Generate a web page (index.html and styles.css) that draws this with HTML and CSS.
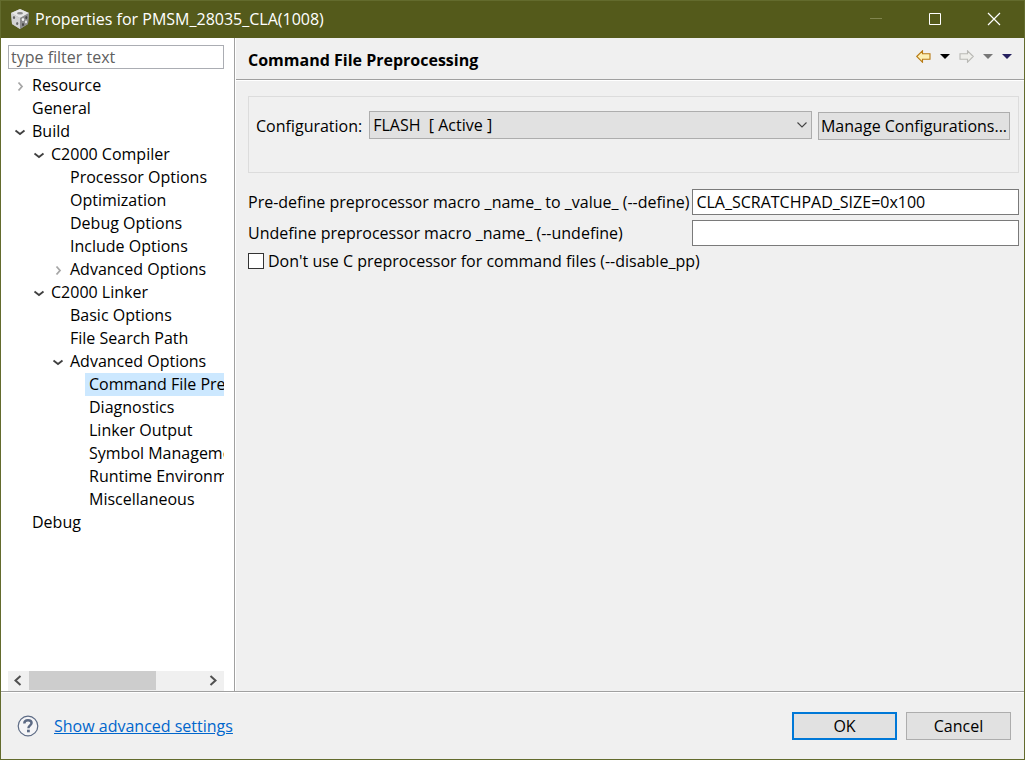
FILE: index.html
```html
<!DOCTYPE html>
<html lang="en">
<head>
<meta charset="utf-8">
<title>Properties for PMSM_28035_CLA(1008)</title>
<link rel="stylesheet" href="styles.css">
</head>
<body>
<svg class="defs" aria-hidden="true">
  <symbol id="closed" viewBox="0 0 20 23"><path d="M10.500 8.500L14 12.500L10.500 16.500" fill="none" stroke="#a6a6a6" stroke-width="1.800"/></symbol>
  <symbol id="open" viewBox="0 0 20 23"><path d="M7.500 10.500L12 14L16.500 10.500" fill="none" stroke="#404040" stroke-width="1.800"/></symbol>
</svg>
<div class="window">
  <header class="titlebar">
    <svg class="app-icon" viewBox="0 0 20 20">
      <path d="M10 0L19 4L18 15L10 20L2 15L1 4Z" fill="#a9a9a9"/>
      <path d="M10 0L19 4L10 9L1 4Z" fill="#e6e6e6"/>
      <path d="M1 4L10 9V20L2 15Z" fill="#d2d2d2"/>
      <path d="M19 4L10 9V20L18 15Z" fill="#8c8c8c"/>
      <ellipse cx="10" cy="4.300" rx="3" ry="1.300" fill="#888"/>
      <ellipse cx="4" cy="8.500" rx="1.100" ry="1.600" fill="#666"/>
      <ellipse cx="7.200" cy="14.500" rx="1.100" ry="1.600" fill="#666"/>
      <ellipse cx="13" cy="10.500" rx="1.200" ry="1.600" fill="#f4f4f4"/>
      <ellipse cx="16.300" cy="8.500" rx="1" ry="1.500" fill="#444"/>
      <ellipse cx="13" cy="15.500" rx="1" ry="1.500" fill="#444"/>
      <ellipse cx="16" cy="13" rx="1" ry="1.400" fill="#eee"/>
    </svg>
    <h1 class="title">Properties for PMSM_28035_CLA(1008)</h1>
    <div class="window-controls">
      <button class="control" aria-label="Minimize" disabled><svg viewBox="0 0 14 14"><path d="M1 6.500H13" stroke="#81854f"/></svg></button>
      <button class="control" aria-label="Maximize"><svg viewBox="0 0 14 14"><path d="M1.500 1.500H12.500V12.500H1.500Z" fill="none" stroke="#fff"/></svg></button>
      <button class="control" aria-label="Close"><svg viewBox="0 0 14 14"><path d="M1 1L13 13M13 1L1 13" stroke="#fff" stroke-width="1.200"/></svg></button>
    </div>
  </header>

  <div class="body">
    <nav class="sidebar">
      <input class="filter" type="text" placeholder="type filter text" aria-label="Filter">
      <div class="tree-view">
        <ul class="tree">
          <li><div class="row"><svg class="toggle"><use href="#closed"/></svg><span class="label">Resource</span></div></li>
          <li><div class="row"><span class="toggle"></span><span class="label">General</span></div></li>
          <li><div class="row"><svg class="toggle"><use href="#open"/></svg><span class="label">Build</span></div>
            <ul class="branch">
              <li><div class="row"><svg class="toggle"><use href="#open"/></svg><span class="label">C2000 Compiler</span></div>
                <ul class="branch">
                  <li><div class="row"><span class="toggle"></span><span class="label">Processor Options</span></div></li>
                  <li><div class="row"><span class="toggle"></span><span class="label">Optimization</span></div></li>
                  <li><div class="row"><span class="toggle"></span><span class="label">Debug Options</span></div></li>
                  <li><div class="row"><span class="toggle"></span><span class="label">Include Options</span></div></li>
                  <li><div class="row"><svg class="toggle"><use href="#closed"/></svg><span class="label">Advanced Options</span></div></li>
                </ul>
              </li>
              <li><div class="row"><svg class="toggle"><use href="#open"/></svg><span class="label">C2000 Linker</span></div>
                <ul class="branch">
                  <li><div class="row"><span class="toggle"></span><span class="label">Basic Options</span></div></li>
                  <li><div class="row"><span class="toggle"></span><span class="label">File Search Path</span></div></li>
                  <li><div class="row"><svg class="toggle"><use href="#open"/></svg><span class="label">Advanced Options</span></div>
                    <ul class="branch">
                      <li><div class="row"><span class="toggle"></span><span class="label selected">Command File Preprocessing</span></div></li>
                      <li><div class="row"><span class="toggle"></span><span class="label">Diagnostics</span></div></li>
                      <li><div class="row"><span class="toggle"></span><span class="label">Linker Output</span></div></li>
                      <li><div class="row"><span class="toggle"></span><span class="label">Symbol Management</span></div></li>
                      <li><div class="row"><span class="toggle"></span><span class="label">Runtime Environment</span></div></li>
                      <li><div class="row"><span class="toggle"></span><span class="label">Miscellaneous</span></div></li>
                    </ul>
                  </li>
                </ul>
              </li>
            </ul>
          </li>
          <li><div class="row"><span class="toggle"></span><span class="label">Debug</span></div></li>
        </ul>
      </div>
      <div class="scrollbar">
        <button class="scroll-button" aria-label="Scroll left"><svg viewBox="0 0 20 20"><path d="M12.500 5L7.500 9.500L12.500 14" fill="none" stroke="#505050" stroke-width="2"/></svg></button>
        <div class="track"><div class="thumb"></div></div>
        <button class="scroll-button" aria-label="Scroll right"><svg viewBox="0 0 20 20"><path d="M7.500 5L12.500 9.500L7.500 14" fill="none" stroke="#505050" stroke-width="2"/></svg></button>
      </div>
    </nav>

    <main class="page">
      <div class="page-header">
        <h2 class="page-title">Command File Preprocessing</h2>
        <div class="history">
          <button class="tool" aria-label="Back"><svg class="arrow" viewBox="0 0 15 13"><path d="M.7 6.500L6.500 .8V3.700H14V9.300H6.500V12.200Z" fill="#fdf0b4" stroke="#b87a14" stroke-width="1.100"/></svg></button>
          <button class="tool" aria-label="Back history"><svg class="caret" viewBox="0 0 10 5"><path d="M0 0H10L5 5Z" fill="#000"/></svg></button>
          <button class="tool" aria-label="Forward"><svg class="arrow" viewBox="0 0 15 13"><path d="M14.300 6.500L8.500 .8V3.700H1V9.300H8.500V12.200Z" fill="#eeeeea" stroke="#b9b9b5" stroke-width="1.100"/></svg></button>
          <button class="tool" aria-label="Forward history"><svg class="caret" viewBox="0 0 10 5"><path d="M0 0H10L5 5Z" fill="#777"/></svg></button>
          <button class="tool" aria-label="View menu"><svg class="caret" viewBox="0 0 10 5"><path d="M0 0H10L5 5Z" fill="#25205f"/></svg></button>
        </div>
      </div>
      <div class="page-content">
        <div class="config">
          <label for="configuration">Configuration:</label>
          <div class="select-box">
            <select id="configuration"><option>FLASH &nbsp;[ Active ]</option></select>
            <svg class="chevron" viewBox="0 0 10 6"><path d="M.5 .5L5 5L9.500 .5" fill="none" stroke="#444" stroke-width="1.100"/></svg>
          </div>
          <button class="button manage">Manage Configurations...</button>
        </div>
        <div class="fields">
          <label for="define">Pre-define preprocessor macro _name_ to _value_ (--define)</label>
          <input class="text" id="define" type="text" value="CLA_SCRATCHPAD_SIZE=0x100">
          <label for="undefine">Undefine preprocessor macro _name_ (--undefine)</label>
          <input class="text" id="undefine" type="text">
        </div>
        <div class="option">
          <input class="check" id="disable-pp" type="checkbox">
          <label for="disable-pp">Don't use C preprocessor for command files (--disable_pp)</label>
        </div>
      </div>
    </main>
  </div>

  <footer class="footer">
    <button class="help" aria-label="Help">
      <svg viewBox="0 0 22 22"><circle cx="11" cy="11" r="9.800" fill="#f5f5f7" stroke="#5d6b85" stroke-width="1.200"/><path d="M7.300 8.600C7.300 6.200 8.900 5.200 11 5.200C13.200 5.200 14.600 6.400 14.600 8.100C14.600 10.300 11.400 10.600 11.400 13.200" fill="none" stroke="#5d6b85" stroke-width="2.400"/><path d="M10 14.700H12.800V17.300H10Z" fill="#5d6b85"/></svg>
    </button>
    <a class="link" href="#">Show advanced settings</a>
    <div class="actions">
      <button class="button default">OK</button>
      <button class="button">Cancel</button>
    </div>
  </footer>
</div>
</body>
</html>
```
FILE: styles.css
```css
* {
  box-sizing: border-box;
}

body {
  margin: 0;
  font: 16px/22px "Open Sans", "Noto Sans", sans-serif;
  color: #000;
}

button,
input,
select {
  margin: 0;
  font: inherit;
  color: inherit;
  border-radius: 0;
}

.defs {
  display: none;
}

.window {
  display: flex;
  flex-direction: column;
  min-height: 100vh;
  border: 1px solid #636b2d;
  background: #f0f0f0;
}

.titlebar {
  display: flex;
  align-items: center;
  height: 37px;
  padding: 0 1px 1px 9px;
  gap: 5px;
  background: #545a1b;
  color: #fff;
}

.app-icon {
  width: 20px;
  height: 20px;
}

.title {
  margin: 0;
  font-size: 16px;
  font-weight: 400;
}

.window-controls {
  display: flex;
  align-self: stretch;
  margin-left: auto;
}

.control {
  display: flex;
  align-items: center;
  justify-content: center;
  width: 59px;
  padding: 0;
  border: 0;
  background: none;
}

.control svg {
  width: 14px;
  height: 14px;
}

.body {
  display: flex;
  flex: 1;
}

.sidebar {
  display: flex;
  flex: none;
  flex-direction: column;
  width: 234px;
  padding: 7px 10px 0 7px;
  border-right: 1px solid #a0a0a0;
  background: #fff;
}

.filter {
  width: 100%;
  height: 24px;
  padding: 0 2px;
  border: 1px solid #abadb3;
  background: #fff;
}

.filter::placeholder {
  color: #606060;
  opacity: 1;
}

.tree-view {
  flex: 1;
  margin-top: 5px;
  overflow: hidden;
}

.tree,
.branch {
  margin: 0;
  padding: 0;
  list-style: none;
}

.branch {
  padding-left: 19px;
}

.row {
  display: flex;
  height: 23px;
  line-height: 23px;
  white-space: nowrap;
}

.toggle {
  flex: none;
  width: 20px;
  height: 23px;
}

.label {
  padding: 0 4px;
}

.selected {
  background: #cce8ff;
}

.scrollbar {
  display: flex;
  height: 20px;
  background: #f0f0f0;
}

.scroll-button {
  width: 21px;
  padding: 0;
  border: 0;
  background: none;
}

.scroll-button svg {
  display: block;
  width: 20px;
  height: 20px;
}

.track {
  flex: 1;
}

.thumb {
  width: 73%;
  height: 19px;
  background: #cdcdcd;
}

.page {
  flex: 1;
  min-width: 0;
  border-left: 1px solid #fff;
}

.page-header {
  display: flex;
  align-items: center;
  justify-content: space-between;
  height: 42px;
  padding: 0 12px;
  border-bottom: 1px solid #a0a0a0;
  box-shadow: 0 1px #fff;
}

.page-title {
  margin: 0;
  padding-top: 2px;
  font-size: 16px;
  font-weight: 700;
}

.history {
  display: flex;
  align-items: center;
  gap: 9px;
  padding-bottom: 4px;
}

.tool {
  display: block;
  padding: 0;
  border: 0;
  background: none;
}

.tool svg {
  display: block;
}

.arrow {
  width: 15px;
  height: 13px;
}

.caret {
  width: 10px;
  height: 5px;
}

.page-content {
  padding: 16px 5px 0 12px;
}

.config {
  display: flex;
  align-items: flex-start;
  height: 77px;
  padding: 14px 8px 0 7px;
  border: 1px solid #dcdcdc;
}

.config label {
  padding-top: 4px;
}

.select-box {
  position: relative;
  flex: 1;
  margin: 0 6px 0 7px;
}

.select-box select {
  display: block;
  width: 100%;
  height: 28px;
  padding: 0 3px;
  appearance: none;
  border: 1px solid #adadad;
  background: #e1e1e1;
}

.chevron {
  position: absolute;
  top: 11px;
  right: 5px;
  width: 10px;
  height: 6px;
  pointer-events: none;
}

.button {
  width: 105px;
  height: 28px;
  padding: 0;
  border: 1px solid #adadad;
  background: #e1e1e1;
}

.manage {
  width: 192px;
  margin-top: 1px;
}

.default {
  border: 2px solid #0078d7;
}

.fields {
  display: grid;
  grid-template-columns: max-content 1fr;
  align-items: center;
  gap: 5px 3px;
  margin-top: 16px;
  white-space: nowrap;
}

.text {
  width: 100%;
  height: 26px;
  padding: 0 3px;
  border: 1px solid #7a7a7a;
  background: #fff;
}

.option {
  display: flex;
  align-items: center;
  gap: 4px;
  margin-top: 4px;
}

.check {
  width: 16px;
  height: 16px;
  appearance: none;
  border: 1px solid #333;
  background: #fff;
}

.footer {
  display: flex;
  align-items: center;
  height: 68px;
  padding: 0 13px 0 16px;
  border-top: 1px solid #a0a0a0;
  box-shadow: inset 0 1px #fff;
}

.help {
  padding: 0;
  border: 0;
  background: none;
}

.help svg {
  display: block;
  width: 22px;
  height: 22px;
}

.link {
  margin-left: 15px;
  color: #0066cc;
}

.actions {
  display: flex;
  gap: 9px;
  margin-left: auto;
}
```
